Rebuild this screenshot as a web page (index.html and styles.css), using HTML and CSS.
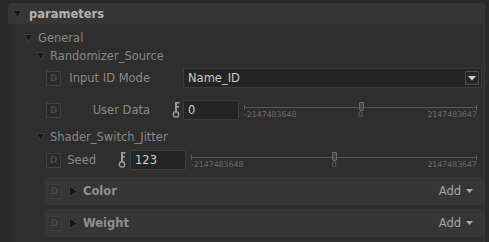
FILE: index.html
```html
<!DOCTYPE html>
<html lang="en">
<head>
    <meta charset="UTF-8">
    <meta name="viewport" content="width=device-width, initial-scale=1.0">
    <title>Parameters</title>
    <link rel="stylesheet" href="styles.css">
</head>
<body>
    <div class="section">
        <div class="section-head">
            <svg class="tri" width="9" height="8" viewBox="0 0 9 8"><polygon points="0.5,0.5 8.5,0.5 4.5,7.5"/></svg>
            <span>parameters</span>
        </div>

        <div class="section-body">
            <div class="tree-row lvl1">
                <svg class="tri" width="9" height="8" viewBox="0 0 9 8"><polygon points="0.5,0.5 8.5,0.5 4.5,7.5"/></svg>
                <span>General</span>
            </div>

            <!-- Randomizer source -->
            <div class="tree-row lvl2">
                <svg class="tri" width="9" height="8" viewBox="0 0 9 8"><polygon points="0.5,0.5 8.5,0.5 4.5,7.5"/></svg>
                <span>Randomizer_Source</span>
            </div>

            <div class="param group-a">
                <span class="d-icon">D</span>
                <span class="label">Input ID Mode</span>
                <span class="key-slot"></span>
                <div class="select">
                    <span>Name_ID</span>
                    <span class="select-btn">
                        <svg width="8" height="5" viewBox="0 0 8 5"><polygon points="0,0 8,0 4,4.5"/></svg>
                    </span>
                </div>
            </div>

            <div class="param group-a tall">
                <span class="d-icon">D</span>
                <span class="label">User Data</span>
                <span class="key-slot">
                    <svg class="key" width="8" height="16" viewBox="0 0 8 16">
                        <rect x="3" y="0" width="2" height="10"/>
                        <rect x="5" y="0" width="2.5" height="1.6"/>
                        <rect x="5" y="4" width="2" height="1.6"/>
                        <circle cx="4" cy="12.4" r="2.7"/>
                    </svg>
                </span>
                <div class="num-input">0</div>
                <div class="slider">
                    <div class="track">
                        <span class="tick start"></span>
                        <span class="handle"></span>
                        <span class="tick end"></span>
                    </div>
                    <div class="scale">
                        <span>-2147483648</span>
                        <span>0</span>
                        <span>2147483647</span>
                    </div>
                </div>
            </div>

            <!-- Shader switch jitter -->
            <div class="tree-row lvl2 short">
                <svg class="tri" width="9" height="8" viewBox="0 0 9 8"><polygon points="0.5,0.5 8.5,0.5 4.5,7.5"/></svg>
                <span>Shader_Switch_Jitter</span>
            </div>

            <div class="param group-b seed-row">
                <span class="d-icon">D</span>
                <span class="label">Seed</span>
                <span class="key-slot">
                    <svg class="key" width="8" height="16" viewBox="0 0 8 16">
                        <rect x="3" y="0" width="2" height="10"/>
                        <rect x="5" y="0" width="2.5" height="1.6"/>
                        <rect x="5" y="4" width="2" height="1.6"/>
                        <circle cx="4" cy="12.4" r="2.7"/>
                    </svg>
                </span>
                <div class="num-input">123</div>
                <div class="slider">
                    <div class="track">
                        <span class="tick start"></span>
                        <span class="handle"></span>
                        <span class="tick end"></span>
                    </div>
                    <div class="scale">
                        <span>-2147483648</span>
                        <span>0</span>
                        <span>2147483647</span>
                    </div>
                </div>
            </div>

            <div class="group first">
                <span class="d-icon">D</span>
                <svg class="tri-right" width="9" height="11" viewBox="0 0 9 11"><polygon points="0.5,0.5 8.5,5.5 0.5,10.5"/></svg>
                <span class="group-title">Color</span>
                <span class="add">Add
                    <svg width="7" height="5" viewBox="0 0 7 5"><polygon points="0,0 7,0 3.5,4"/></svg>
                </span>
            </div>

            <div class="group">
                <span class="d-icon">D</span>
                <svg class="tri-right" width="9" height="11" viewBox="0 0 9 11"><polygon points="0.5,0.5 8.5,5.5 0.5,10.5"/></svg>
                <span class="group-title">Weight</span>
                <span class="add">Add
                    <svg width="7" height="5" viewBox="0 0 7 5"><polygon points="0,0 7,0 3.5,4"/></svg>
                </span>
            </div>
        </div>
    </div>
</body>
</html>
```

FILE: styles.css
```css
* {
    margin: 0;
    padding: 0;
    box-sizing: border-box;
}

body {
    width: 489px;
    height: 242px;
    overflow: hidden;
    padding-top: 3px;
    background-color: #292929;
    color: #878787;
    font-family: "DejaVu Sans", Verdana, sans-serif;
    font-size: 11.5px;
}

.section {
    margin-left: 8px;
    margin-right: 4px;
}

.section-head {
    height: 21px;
    display: flex;
    align-items: center;
    gap: 7px;
    padding-left: 5px;
    background-color: #363636;
    border-radius: 4px 4px 0 0;
    color: #b3b3b3;
    font-weight: bold;
}

.section-body {
    height: 230px;
    margin-left: 4px;
    padding-top: 5px;
    background-color: #2e2e2e;
    border-right: 1px solid #393939;
}

.tri polygon,
.tri-right polygon {
    fill: #161616;
    stroke: #404040;
    stroke-width: 1;
}

/* Tree rows */
.tree-row {
    height: 18px;
    display: flex;
    align-items: center;
    gap: 5px;
}

.tree-row.lvl1 {
    padding-left: 12px;
}

.tree-row.lvl2 {
    padding-left: 24px;
}

.tree-row.short {
    height: 15px;
}

/* Parameter rows */
.param {
    height: 26px;
    display: flex;
    align-items: center;
    padding-left: 34px;
}

.param.tall {
    height: 38px;
}

.param.seed-row {
    height: 32px;
}

.d-icon {
    width: 15px;
    height: 15px;
    flex-shrink: 0;
    display: flex;
    align-items: center;
    justify-content: center;
    margin-right: 6px;
    background-color: #2b2b2b;
    border: 1px solid #404040;
    color: #474747;
    font-size: 9px;
    font-weight: bold;
}

.label {
    text-align: right;
    white-space: nowrap;
    color: #8a8a8a;
}

.group-a .label {
    width: 83px;
}

.group-b .label {
    width: 29px;
}

.key-slot {
    width: 33px;
    height: 16px;
    display: flex;
    justify-content: flex-end;
    padding-right: 3px;
}

.group-b .key-slot {
    width: 34px;
    padding-right: 4px;
}

.key rect {
    fill: #9c9c9c;
}

.key circle {
    fill: none;
    stroke: #9c9c9c;
    stroke-width: 1.4;
}

.select {
    flex: 1;
    height: 20px;
    margin-right: 2px;
    display: flex;
    align-items: center;
    justify-content: space-between;
    padding: 0 2px 0 4px;
    background-color: #242424;
    border: 1px solid #3b3b3b;
    color: #c9c9c9;
}

.select-btn {
    width: 14px;
    height: 14px;
    display: flex;
    align-items: center;
    justify-content: center;
    border: 1px solid #464646;
    background-color: #282828;
}

.select-btn polygon {
    fill: #d0d0d0;
}

.num-input {
    width: 56px;
    height: 20px;
    flex-shrink: 0;
    display: flex;
    align-items: center;
    padding-left: 4px;
    background-color: #242424;
    border: 1px solid #3b3b3b;
    color: #cfcfcf;
}

/* Slider */
.slider {
    flex: 1;
    margin: 1px 7px 0 5px;
}

.track {
    position: relative;
    height: 9px;
}

.track::before {
    content: "";
    position: absolute;
    left: 0;
    right: 0;
    top: 5px;
    height: 1px;
    background-color: #575757;
}

.tick {
    position: absolute;
    top: 3px;
    width: 1px;
    height: 5px;
    background-color: #5f5f5f;
}

.tick.start {
    left: 0;
}

.tick.end {
    right: 0;
}

.handle {
    position: absolute;
    left: 50%;
    top: 0;
    width: 5px;
    height: 9px;
    margin-left: -2px;
    background-color: #464646;
    border: 1px solid #6a6a6a;
    border-radius: 0 0 2px 2px;
}

.scale {
    display: grid;
    grid-template-columns: 1fr auto 1fr;
    font-size: 7.8px;
    line-height: 8px;
    color: #6c6c6c;
}

.scale span:last-child {
    text-align: right;
}

/* Collapsed groups */
.group {
    height: 28px;
    margin-left: 32px;
    margin-top: 4px;
    display: flex;
    align-items: center;
    padding: 0 11px 0 3px;
    background-color: #363636;
    border-radius: 4px;
}

.group.first {
    margin-top: 1px;
}

.group .d-icon {
    margin-right: 7px;
    background-color: #333;
    border-color: #3e3e3e;
}

.tri-right {
    margin-right: 5px;
}

.group-title {
    flex: 1;
    font-weight: bold;
    color: #8f8f8f;
}

.add {
    display: flex;
    align-items: center;
    gap: 5px;
    color: #a3a3a3;
}

.add polygon {
    fill: #a8a8a8;
}
```
